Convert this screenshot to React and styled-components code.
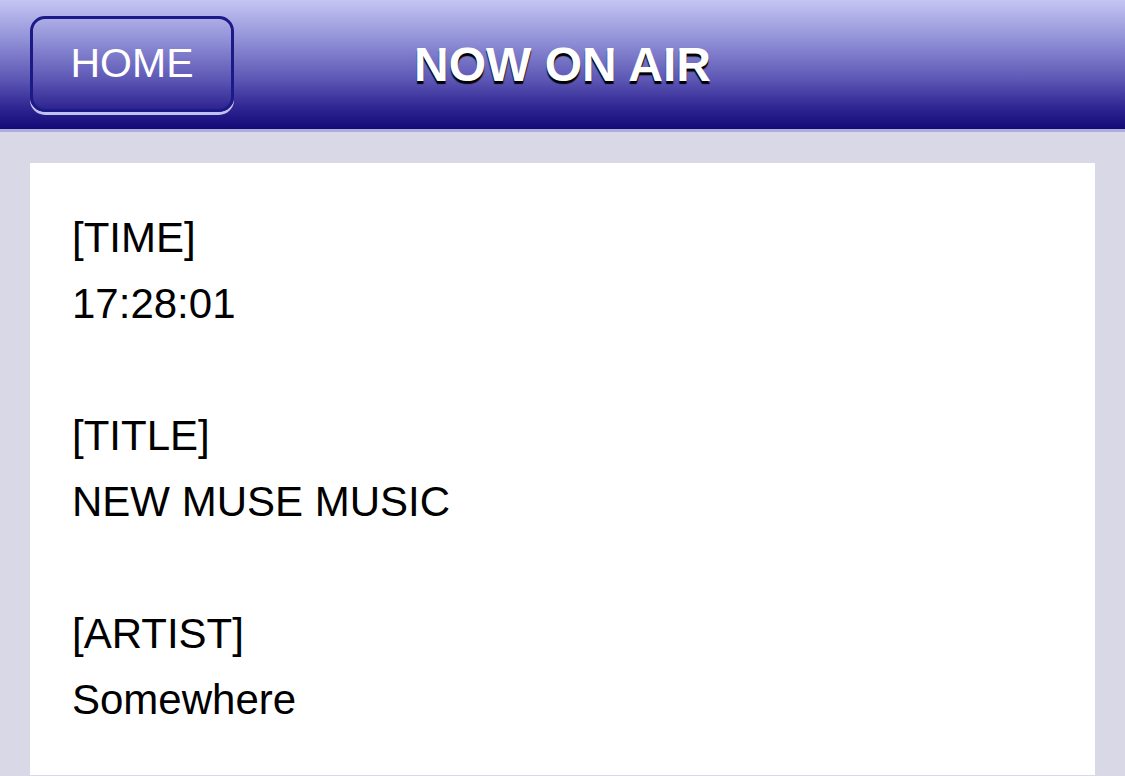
import React from "react";
import styled, { createGlobalStyle } from "styled-components";

const Global = createGlobalStyle`
  html, body { margin: 0; padding: 0; background: #d9d8e6; }
  body { font-family: Helvetica, "Liberation Sans", Arial, sans-serif; }
`;

const Page = styled.div`
  width: 1125px;
  height: 776px;
  overflow: hidden;
  background: #d9d8e6;
  display: flex;
  flex-direction: column;
`;

const Header = styled.header`
  position: relative;
  height: 129px;
  flex: none;
  display: flex;
  align-items: center;
  justify-content: center;
  background: linear-gradient(to bottom, #c5c5f3 0%, #9292d8 30%, #5c56b4 62%, #2c2290 85%, #120a76 100%);
  border-bottom: 3px solid #aeaedc;
`;

const HomeButton = styled.button`
  position: absolute;
  left: 30px;
  top: 16px;
  width: 204px;
  height: 96px;
  box-sizing: border-box;
  border: 3px solid #1c1a86;
  border-radius: 15px;
  background: transparent;
  box-shadow: 0 3px 0 #c2c2f2;
  color: #fff;
  font-family: Helvetica, "Liberation Sans", Arial, sans-serif;
  font-size: 41px;
  padding: 0 0 2px;
  cursor: pointer;
`;

const Title = styled.h1`
  margin: 0;
  color: #fff;
  font-size: 48px;
  font-weight: bold;
  text-shadow: 0 3px 1px #000;
`;

const Body = styled.main`
  flex: 1;
  padding: 31px 30px 2px;
  display: flex;
  flex-direction: column;
`;

const Card = styled.section`
  flex: 1;
  background: #fff;
  padding: 42px 42px;
  color: #000;
  font-size: 42px;
  line-height: 66px;
`;

const Field = styled.div`
  & + & { margin-top: 66px; }
`;

const Line = styled.div``;

const fields = [
  ["[TIME]", "17:28:01"],
  ["[TITLE]", "NEW MUSE MUSIC"],
  ["[ARTIST]", "Somewhere"],
];

export default function App() {
  return (
    <Page>
      <Global />
      <Header>
        <HomeButton>HOME</HomeButton>
        <Title>NOW ON AIR</Title>
      </Header>
      <Body>
        <Card>
          {fields.map(([label, value]) => (
            <Field key={label}>
              <Line>{label}</Line>
              <Line>{value}</Line>
            </Field>
          ))}
        </Card>
      </Body>
    </Page>
  );
}
